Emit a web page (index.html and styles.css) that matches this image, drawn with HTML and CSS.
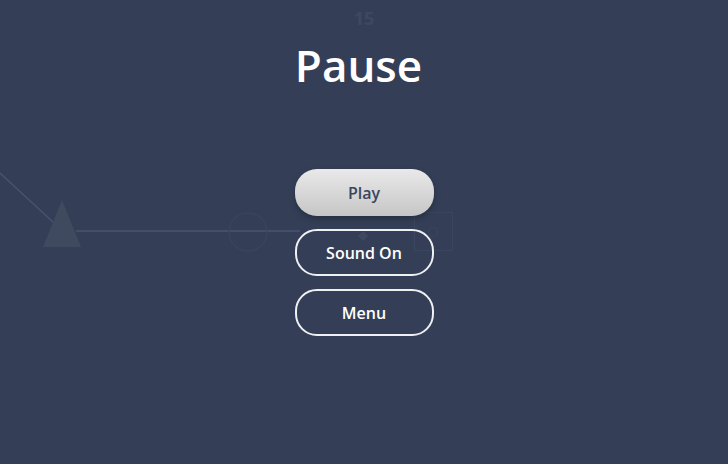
FILE: index.html
```html
<!DOCTYPE html>
<html>
<head>
<meta charset="utf-8">
<link rel="stylesheet" href="styles.css">
</head>
<body>
<div class="screen">
  <svg class="scene" width="728" height="464" viewBox="0 0 728 464">
    <line x1="0" y1="173" x2="54" y2="223" class="ln"/>
    <line x1="76" y1="231" x2="300" y2="231" class="ln"/>
    <polygon points="62,200 43,247 81,247" class="tri"/>
    <circle cx="248" cy="232" r="19" class="faint"/>
    <polygon points="363,231 368,236 363,241 358,236" class="dia"/>
    <rect x="414.5" y="212.5" width="38" height="38" class="faint"/>
    <circle cx="433" cy="232" r="4.5" class="faint"/>
  </svg>
  <div class="score">15</div>
  <h1 class="title">Pause</h1>
  <div class="menu">
    <button class="btn btn-primary">Play</button>
    <button class="btn btn-outline">Sound On</button>
    <button class="btn btn-outline">Menu</button>
  </div>
</div>
</body>
</html>
```

FILE: styles.css
```css
html, body {
  margin: 0;
  padding: 0;
}
body {
  background: #343f57;
  font-family: "Open Sans", "Noto Sans", sans-serif;
  width: 728px;
  height: 464px;
  overflow: hidden;
}
.screen {
  position: relative;
  width: 728px;
  height: 464px;
  display: flex;
  flex-direction: column;
  align-items: center;
}
.scene {
  position: absolute;
  left: 0;
  top: 0;
}
.ln {
  stroke: #485470;
  stroke-width: 1.3;
}
.tri {
  fill: #3f4a5e;
}
.faint {
  fill: none;
  stroke: #3a465e;
  stroke-width: 1.2;
}
.dia {
  fill: #3d4962;
}
.score {
  position: relative;
  margin-top: 6px;
  font-size: 18px;
  line-height: 24px;
  font-weight: 700;
  color: #3d4962;
}
.title {
  position: relative;
  margin: 7px 0 0;
  font-size: 44px;
  line-height: 56px;
  font-weight: 600;
  color: #ffffff;
  padding-right: 11px;
}
.menu {
  position: relative;
  margin-top: 76px;
  display: flex;
  flex-direction: column;
  gap: 13px;
}
.btn {
  width: 139px;
  height: 47px;
  border-radius: 22px;
  font-family: "Open Sans", "Noto Sans", sans-serif;
  font-size: 16px;
  font-weight: 600;
  padding: 0;
  box-sizing: border-box;
}
.btn-primary {
  border: none;
  background: linear-gradient(#e9e9e9, #c6c6c6);
  color: #3a465e;
  box-shadow: 0 3px 6px rgba(0, 0, 0, 0.25);
}
.btn-outline {
  border: 2px solid #eef0f3;
  background: transparent;
  color: #ffffff;
}
```
